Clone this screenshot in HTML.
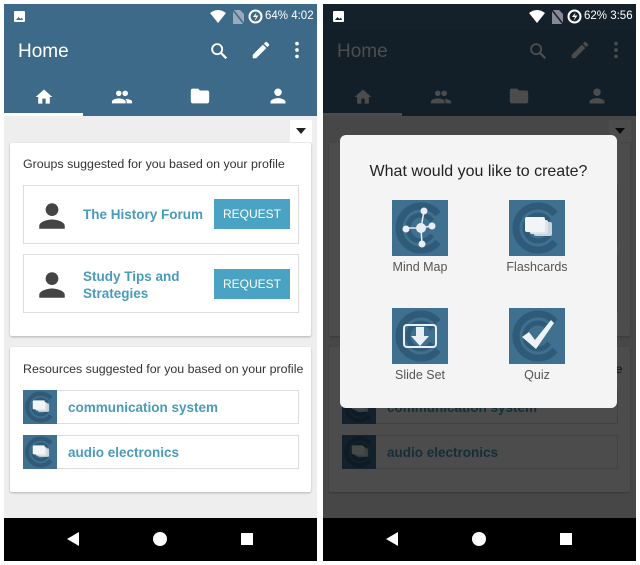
<!DOCTYPE html>
<html><head><meta charset="utf-8">
<style>
*{margin:0;padding:0;box-sizing:border-box}
body{width:640px;height:565px;background:#fff;position:relative;overflow:hidden;font-family:"Liberation Sans",Arial,sans-serif}
.scr{position:absolute;top:4px;width:313px;height:557px;background:#eeeeee;overflow:hidden}
.a{position:absolute}
.bar{left:0;top:0;width:313px;height:112px;background:#3d6a89}
.ind{left:0;top:109px;width:79px;height:3px;background:#fff}
.card{background:#fff;box-shadow:0 1px 2px rgba(0,0,0,.25);border-radius:2px}
.item{background:#fff;border:1px solid #ddd}
.t{font-size:12.4px;color:#333;white-space:nowrap}
.lk{font-size:13.5px;font-weight:bold;color:#4a9bbb;white-space:nowrap}
.btn{background:#4ba3c3;color:#fff;font-size:12px;text-align:center;line-height:30px;width:76px;height:30px}
.nav{left:0;top:514px;width:313px;height:43px;background:#000}
.ov{left:0;top:26px;width:313px;height:531px;background:rgba(0,0,0,.7)}
.status{font-size:11.5px;color:#fff;white-space:nowrap}
.dlg{position:absolute;left:340px;top:135px;width:277px;height:273px;background:#f4f4f4;border-radius:6px}
.ic{position:absolute;width:56px;height:56px;background:#3f7090}
.lb{position:absolute;font-size:12.5px;color:#555;width:100px;text-align:center}
</style></head><body>
<svg width="0" height="0" style="position:absolute">
<defs>
<symbol id="person" viewBox="0 0 24 24"><circle cx="12" cy="7.5" r="4.5" fill="currentColor"/><path d="M3 21v-2c0-3 6-4.5 9-4.5s9 1.5 9 4.5v2z" fill="currentColor"/></symbol>
<symbol id="group" viewBox="0 0 24 24"><circle cx="8.5" cy="8" r="3" fill="currentColor"/><circle cx="15.5" cy="8" r="3" fill="currentColor"/><path d="M1 19v-2c0-2 4.5-3.5 7.5-3.5S16 15 16 17v2z M17 19v-2c0-1.2-.6-2.2-1.6-3 3 .2 7.6 1.2 7.6 3v2z" fill="currentColor"/></symbol>
<symbol id="home" viewBox="0 0 24 24"><path d="M10 20v-6h4v6h5v-8h3L12 3 2 12h3v8z" fill="currentColor"/></symbol>
<symbol id="folder" viewBox="0 0 24 24"><path d="M10 4H4c-1.1 0-2 .9-2 2v12c0 1.1.9 2 2 2h16c1.1 0 2-.9 2-2V8c0-1.1-.9-2-2-2h-8z" fill="currentColor"/></symbol>
<symbol id="search" viewBox="0 0 24 24"><circle cx="10" cy="10" r="5.5" fill="none" stroke="currentColor" stroke-width="2"/><path d="M14 14l6 6" stroke="currentColor" stroke-width="2.4"/></symbol>
<symbol id="pen" viewBox="0 0 24 24"><path d="M3 17.25V21h3.75L17.8 9.94l-3.75-3.75zM20.7 7.04a1 1 0 000-1.41l-2.34-2.34a1 1 0 00-1.41 0l-1.83 1.83 3.75 3.75z" fill="currentColor"/></symbol>
<symbol id="dots" viewBox="0 0 24 24"><circle cx="12" cy="5" r="2" fill="currentColor"/><circle cx="12" cy="12" r="2" fill="currentColor"/><circle cx="12" cy="19" r="2" fill="currentColor"/></symbol>
<symbol id="clogo" viewBox="0 0 56 56"><path d="M46 14A22 22 0 1 0 46 42" fill="none" stroke="#2f5a78" stroke-width="7"/><path d="M40 21A13 13 0 1 0 40 35" fill="none" stroke="#2f5a78" stroke-width="5"/></symbol>
<symbol id="cards" viewBox="0 0 56 56"><use href="#clogo"/><rect x="25" y="22" width="18" height="14" rx="2" fill="#c8d4dc"/><rect x="21" y="20" width="18" height="14" rx="2" fill="#dfe6ea"/><rect x="16" y="17" width="20" height="15" rx="2" fill="#f2f4f5"/></symbol>
</defs></svg>

<!-- LEFT SCREEN -->
<div class="scr" style="left:4px">
 <div class="a bar"></div>
 <svg class="a" style="left:10px;top:7px" width="11" height="11" viewBox="0 0 11 11"><rect width="11" height="11" rx="1" fill="#fff"/><path d="M2 9l2.5-3 2 2 1.5-1.5L9 9z" fill="#3d6a89"/></svg>
 <svg class="a" style="left:206px;top:6px" width="16" height="13" viewBox="0 0 16 13"><path d="M0 3Q8-3 16 3L8 13z" fill="#fff"/></svg>
 <svg class="a" style="left:229px;top:6px" width="11" height="14" viewBox="0 0 11 14"><path d="M0 0h7l4 4v10H0z" fill="#9ab"/><path d="M0 0L11 14" stroke="#3d6a89" stroke-width="1.5"/></svg>
 <svg class="a" style="left:244px;top:5px" width="15" height="15" viewBox="0 0 15 15"><circle cx="7.5" cy="7.5" r="6" fill="none" stroke="#fff" stroke-width="2"/><path d="M8.5 3.5L5 8h3l-1.5 4 4-5.5h-3z" fill="#fff"/></svg>
 <div class="a status" style="left:261px;top:6px">64% 4:02</div>
 <div class="a" style="left:14px;top:37px;font-size:19px;color:#fff">Home</div>
 <svg class="a" style="left:204px;top:36px;color:#fff" width="22" height="22"><use href="#search"/></svg>
 <svg class="a" style="left:246px;top:35px;color:#fff" width="22" height="22"><use href="#pen"/></svg>
 <svg class="a" style="left:282px;top:35px;color:#fff" width="22" height="22"><use href="#dots"/></svg>
 <svg class="a" style="left:30px;top:83px;color:#fff" width="20" height="20"><use href="#home"/></svg>
 <svg class="a" style="left:107px;top:82px;color:#fff" width="22" height="22"><use href="#group"/></svg>
 <svg class="a" style="left:185px;top:81px;color:#fff" width="22" height="22"><use href="#folder"/></svg>
 <svg class="a" style="left:264px;top:82px;color:#fff" width="20" height="20"><use href="#person"/></svg>
 <div class="a ind"></div>
 <div class="a" style="left:286px;top:116px;width:22px;height:22px;background:#fff"></div>
 <svg class="a" style="left:292px;top:124px" width="10" height="6"><path d="M0 0h10L5 6z" fill="#222"/></svg>

 <div class="a card" style="left:6px;top:139px;width:301px;height:193px"></div>
 <div class="a t" style="left:19px;top:153px">Groups suggested for you based on your profile</div>
 <div class="a item" style="left:19px;top:181px;width:276px;height:59px"></div>
 <svg class="a" style="left:31px;top:195px;color:#444" width="34" height="34"><use href="#person"/></svg>
 <div class="a lk" style="left:79px;top:203px">The History Forum</div>
 <div class="a btn" style="left:210px;top:195px">REQUEST</div>
 <div class="a item" style="left:19px;top:250px;width:276px;height:59px"></div>
 <svg class="a" style="left:31px;top:264px;color:#444" width="34" height="34"><use href="#person"/></svg>
 <div class="a lk" style="left:79px;top:264px;line-height:17px">Study Tips and<br>Strategies</div>
 <div class="a btn" style="left:210px;top:265px">REQUEST</div>

 <div class="a card" style="left:6px;top:343px;width:301px;height:145px"></div>
 <div class="a t" style="left:19px;top:358px">Resources suggested for you based on your profile</div>
 <div class="a item" style="left:19px;top:386px;width:276px;height:34px"></div>
 <svg class="a" style="left:19px;top:386px;background:#3f7090" width="34" height="34" viewBox="0 0 56 56"><use href="#cards"/></svg>
 <div class="a lk" style="left:64px;top:396px">communication system</div>
 <div class="a item" style="left:19px;top:431px;width:276px;height:34px"></div>
 <svg class="a" style="left:19px;top:431px;background:#3f7090" width="34" height="34" viewBox="0 0 56 56"><use href="#cards"/></svg>
 <div class="a lk" style="left:64px;top:441px">audio electronics</div>

 <div class="a nav"></div>
 <svg class="a" style="left:63px;top:528px" width="12" height="14"><path d="M12 0v14L0 7z" fill="#fff"/></svg>
 <svg class="a" style="left:149px;top:528px" width="14" height="14"><circle cx="7" cy="7" r="7" fill="#fff"/></svg>
 <svg class="a" style="left:237px;top:529px" width="12" height="12"><rect width="12" height="12" fill="#fff"/></svg>
</div>

<!-- RIGHT SCREEN -->
<div class="scr" style="left:323px">
 <div class="a bar"></div>
 <svg class="a" style="left:30px;top:83px;color:#fff" width="20" height="20"><use href="#home"/></svg>
 <svg class="a" style="left:107px;top:82px;color:#fff" width="22" height="22"><use href="#group"/></svg>
 <svg class="a" style="left:185px;top:81px;color:#fff" width="22" height="22"><use href="#folder"/></svg>
 <svg class="a" style="left:264px;top:82px;color:#fff" width="20" height="20"><use href="#person"/></svg>
 <div class="a" style="left:14px;top:37px;font-size:19px;color:#fff">Home</div>
 <svg class="a" style="left:204px;top:36px;color:#fff" width="22" height="22"><use href="#search"/></svg>
 <svg class="a" style="left:246px;top:35px;color:#fff" width="22" height="22"><use href="#pen"/></svg>
 <svg class="a" style="left:282px;top:35px;color:#fff" width="22" height="22"><use href="#dots"/></svg>
 <div class="a ind"></div>
 <div class="a" style="left:286px;top:116px;width:22px;height:22px;background:#fff"></div>
 <svg class="a" style="left:292px;top:124px" width="10" height="6"><path d="M0 0h10L5 6z" fill="#222"/></svg>
 <div class="a card" style="left:6px;top:139px;width:301px;height:193px"></div>
 <div class="a t" style="left:19px;top:153px">Groups suggested for you based on your profile</div>
 <div class="a item" style="left:19px;top:181px;width:276px;height:59px"></div>
 <svg class="a" style="left:31px;top:195px;color:#444" width="34" height="34"><use href="#person"/></svg>
 <div class="a lk" style="left:79px;top:203px">The History Forum</div>
 <div class="a btn" style="left:210px;top:195px">REQUEST</div>
 <div class="a item" style="left:19px;top:250px;width:276px;height:59px"></div>
 <svg class="a" style="left:31px;top:264px;color:#444" width="34" height="34"><use href="#person"/></svg>
 <div class="a lk" style="left:79px;top:264px;line-height:17px">Study Tips and<br>Strategies</div>
 <div class="a btn" style="left:210px;top:265px">REQUEST</div>
 <div class="a card" style="left:6px;top:343px;width:301px;height:145px"></div>
 <div class="a t" style="left:19px;top:358px">Resources suggested for you based on your profile</div>
 <div class="a item" style="left:19px;top:386px;width:276px;height:34px"></div>
 <svg class="a" style="left:19px;top:386px;background:#3f7090" width="34" height="34" viewBox="0 0 56 56"><use href="#cards"/></svg>
 <div class="a lk" style="left:64px;top:396px">communication system</div>
 <div class="a item" style="left:19px;top:431px;width:276px;height:34px"></div>
 <svg class="a" style="left:19px;top:431px;background:#3f7090" width="34" height="34" viewBox="0 0 56 56"><use href="#cards"/></svg>
 <div class="a lk" style="left:64px;top:441px">audio electronics</div>
 <div class="a ov"></div>
 <div class="a" style="left:0;top:0;width:313px;height:26px;background:#14202a"></div>
 <svg class="a" style="left:10px;top:7px" width="11" height="11" viewBox="0 0 11 11"><rect width="11" height="11" rx="1" fill="#fff"/><path d="M2 9l2.5-3 2 2 1.5-1.5L9 9z" fill="#14202a"/></svg>
 <svg class="a" style="left:206px;top:6px" width="16" height="13" viewBox="0 0 16 13"><path d="M0 3Q8-3 16 3L8 13z" fill="#fff"/></svg>
 <svg class="a" style="left:229px;top:6px" width="11" height="14" viewBox="0 0 11 14"><path d="M0 0h7l4 4v10H0z" fill="#889"/><path d="M0 0L11 14" stroke="#14202a" stroke-width="1.5"/></svg>
 <svg class="a" style="left:244px;top:5px" width="15" height="15" viewBox="0 0 15 15"><circle cx="7.5" cy="7.5" r="6" fill="none" stroke="#fff" stroke-width="2"/><path d="M8.5 3.5L5 8h3l-1.5 4 4-5.5h-3z" fill="#fff"/></svg>
 <div class="a status" style="left:261px;top:6px">62% 3:56</div>
 <div class="a nav"></div>
 <svg class="a" style="left:63px;top:528px" width="12" height="14"><path d="M12 0v14L0 7z" fill="#fff"/></svg>
 <svg class="a" style="left:149px;top:528px" width="14" height="14"><circle cx="7" cy="7" r="7" fill="#fff"/></svg>
 <svg class="a" style="left:237px;top:529px" width="12" height="12"><rect width="12" height="12" fill="#fff"/></svg>
</div>

<div class="dlg">
 <div class="a" style="left:0;top:28px;width:277px;text-align:center;font-size:16px;color:#222">What would you like to create?</div>
 <svg class="ic" style="left:52px;top:65px" viewBox="0 0 56 56"><use href="#clogo"/><path d="M32 11L29 28M14 28h15l10-2M29 28l1 17" stroke="#e8eef2" stroke-width="1.5"/><circle cx="32" cy="11" r="3.5" fill="#e8eef2"/><circle cx="29" cy="28" r="5" fill="#e8eef2"/><circle cx="14" cy="29" r="3.5" fill="#e8eef2"/><circle cx="40" cy="26" r="3.5" fill="#e8eef2"/><circle cx="30" cy="44" r="3.5" fill="#e8eef2"/></svg>
 <svg class="ic" style="left:169px;top:65px" viewBox="0 0 56 56"><use href="#cards"/></svg>
 <div class="lb" style="left:30px;top:125px">Mind Map</div>
 <div class="lb" style="left:147px;top:125px">Flashcards</div>
 <svg class="ic" style="left:52px;top:173px" viewBox="0 0 56 56"><use href="#clogo"/><rect x="12" y="17" width="32" height="22" rx="3" fill="none" stroke="#e8eef2" stroke-width="2"/><path d="M24 19h8v9h5l-9 10-9-10h5z" fill="#e8eef2"/></svg>
 <svg class="ic" style="left:169px;top:173px" viewBox="0 0 56 56"><use href="#clogo"/><path d="M13 29l7-5 6 8 16-20 3 3-18 26z" fill="#eef2f4"/></svg>
 <div class="lb" style="left:30px;top:233px">Slide Set</div>
 <div class="lb" style="left:147px;top:233px">Quiz</div>
</div>
</body></html>
